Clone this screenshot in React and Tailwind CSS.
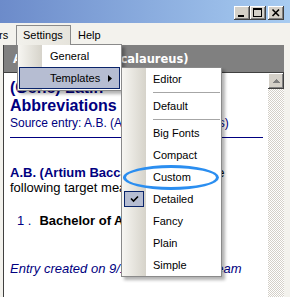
import React from 'react';

const bevel = 'shadow-[inset_-1px_-1px_#404040,inset_1px_1px_#ffffff,inset_-2px_-2px_#808080,inset_2px_2px_#d4d0c8]';

function TitleButton({ children, className = '' }) {
  return (
    <div className={`w-[16px] h-[14px] bg-[#d4d0c8] flex items-center justify-center ${bevel} ${className}`}>
      {children}
    </div>
  );
}

function TitleBar() {
  return (
    <div className="h-[23px] bg-gradient-to-r from-[#6c8bca] to-[#a8ccf1] flex justify-end items-start pt-[6px] pr-[6px]">
      <TitleButton>
        <svg width="16" height="14" shapeRendering="crispEdges">
          <rect x="4" y="9" width="6" height="2" fill="#000" />
        </svg>
      </TitleButton>
      <TitleButton>
        <svg width="16" height="14" shapeRendering="crispEdges">
          <rect x="3.5" y="2.5" width="8" height="8" fill="none" stroke="#000" />
          <rect x="3" y="2" width="9" height="2" fill="#000" />
        </svg>
      </TitleButton>
      <TitleButton className="ml-[2px]">
        <svg width="16" height="14">
          <path d="M4.5 3.5 L11 10 M11 3.5 L4.5 10" stroke="#000" strokeWidth="1.6" />
        </svg>
      </TitleButton>
    </div>
  );
}

function MenuBar() {
  return (
    <div className="h-[22px] flex items-start text-[11px] text-black leading-[18px]">
      <span className="w-[17px] pt-[3px] -ml-[1px]">rs</span>
      <div className="relative z-30 w-[55px] h-[20px] mt-[2px] border border-b-0 border-[#8a8a8a] bg-gradient-to-r from-[#f2f1ec] to-[#e6e4dc] pl-[6px]">
        Settings
      </div>
      <span className="ml-[7px] pt-[3px]">Help</span>
    </div>
  );
}

function Gutter({ className = '' }) {
  return <div className={`absolute left-0 top-0 bottom-0 w-[24px] bg-gradient-to-r from-[#f7f6f2] to-[#d6d3ca] ${className}`} />;
}

function SettingsMenu() {
  return (
    <div className="absolute left-[17px] top-[44px] z-20 w-[105px] h-[47px] bg-white border border-[#8a8a8a] shadow-[3px_3px_3px_rgba(0,0,0,0.3)] text-[11px] text-black">
      <Gutter />
      <div className="relative h-[22px] leading-[22px] pl-[32px]">General</div>
      <div className="relative h-[22px] mx-[1px] flex items-center justify-between bg-[#b6bdd2] border border-[#0a246a] pl-[30px] pr-[7px]">
        <span>Templates</span>
        <svg width="4" height="7">
          <path d="M0 0 L4 3.5 L0 7 Z" fill="#000" />
        </svg>
      </div>
    </div>
  );
}

const templateItems = [
  { label: 'Editor' },
  { sep: true },
  { label: 'Default' },
  { sep: true },
  { label: 'Big Fonts' },
  { label: 'Compact' },
  { label: 'Custom' },
  { label: 'Detailed', checked: true },
  { label: 'Fancy' },
  { label: 'Plain' },
  { label: 'Simple' },
];

function TemplatesMenu() {
  return (
    <div className="absolute left-[121px] top-[67px] z-40 w-[101px] h-[210px] bg-white border border-[#8a8a8a] shadow-[3px_3px_3px_rgba(0,0,0,0.3)] text-[11px] text-black">
      <Gutter />
      {templateItems.map((item, i) =>
        item.sep ? (
          <div key={i} className="relative h-[5px] pt-[2px] pl-[31px] pr-[1px]">
            <div className="h-px bg-[#a6a6a6]" />
          </div>
        ) : (
          <div key={i} className="relative h-[22px] leading-[22px] pl-[31px]">
            {item.checked && (
              <div className="absolute left-[2px] top-[3px] w-[20px] h-[16px] bg-[#b6bdd2] border border-[#0a246a] flex items-center justify-center">
                <svg width="9" height="8">
                  <path d="M1 3.5 L3.5 6 L8 1.5" fill="none" stroke="#000" strokeWidth="1.6" />
                </svg>
              </div>
            )}
            {item.label}
          </div>
        )
      )}
    </div>
  );
}

function Scrollbar() {
  return (
    <div className="w-[16px] flex flex-col">
      <div className={`h-[16px] bg-[#d4d0c8] flex items-center justify-center ${bevel}`}>
        <svg width="7" height="4" shapeRendering="crispEdges">
          <path d="M3.5 0 L7 4 L0 4 Z" fill="#808080" />
        </svg>
      </div>
      <div className="flex-1 bg-[repeating-conic-gradient(#d4d0c8_0%_25%,#ffffff_0%_50%)] bg-size-[2px_2px]" />
    </div>
  );
}

export default function App() {
  return (
    <div className="relative w-[290px] h-[297px] overflow-hidden bg-[#f3f2ed] font-['Liberation_Sans',Arial,sans-serif] flex flex-col">
      <TitleBar />
      <MenuBar />

      <div className="flex-1 min-h-0 flex pl-[3px] pr-[6px]">
        <div className="flex-1 flex flex-col border-l border-[#404040]">
          <div className="h-[27px] bg-[#808080] pt-[7px] pl-[9px] text-white font-bold text-[11.5px] leading-[14px] font-['DejaVu_Sans',Verdana,sans-serif] whitespace-nowrap">
            A.B. (Artium Baccalaureus)
          </div>
          <div className="flex-1 min-h-0 flex border-t border-[#404040]">
            <div className="flex-1 bg-white pl-[6px] pr-[5px] text-[#000080] whitespace-nowrap overflow-hidden">
              <div className="mt-[6px] text-[16px] leading-[18px] font-bold">(Gene) Latin</div>
              <div className="text-[16px] leading-[18px] font-bold">Abbreviations</div>
              <div className="text-[12px] leading-[16px]">Source entry: A.B. (Artium Baccalaureus)</div>
              <div className="mt-[6px] h-px bg-[#000080]" />

              <div className="mt-[27px] text-[13px] leading-[15px]">
                <span className="font-bold">A.B. (Artium Baccalaureus)</span>
                <span className="text-black"> has the</span>
              </div>
              <div className="text-[13px] leading-[15px] text-black">following target meaning:</div>

              <div className="mt-[18px] text-[13px] leading-[15px] pl-[7px]">
                <span>1 .</span>
                <span className="ml-[8px] font-bold text-black">Bachelor of Arts</span>
              </div>

              <div className="mt-[33px] text-[13px] leading-[15px] italic">
                Entry created on 9/15/2004 by the Team
              </div>
            </div>
            <Scrollbar />
          </div>
        </div>
      </div>

      <SettingsMenu />
      <TemplatesMenu />
      <div className="absolute z-50 left-[123px] top-[165px] w-[96px] h-[25px] rounded-[50%] border-[3px] border-[#2b8ef0]" />
    </div>
  );
}
